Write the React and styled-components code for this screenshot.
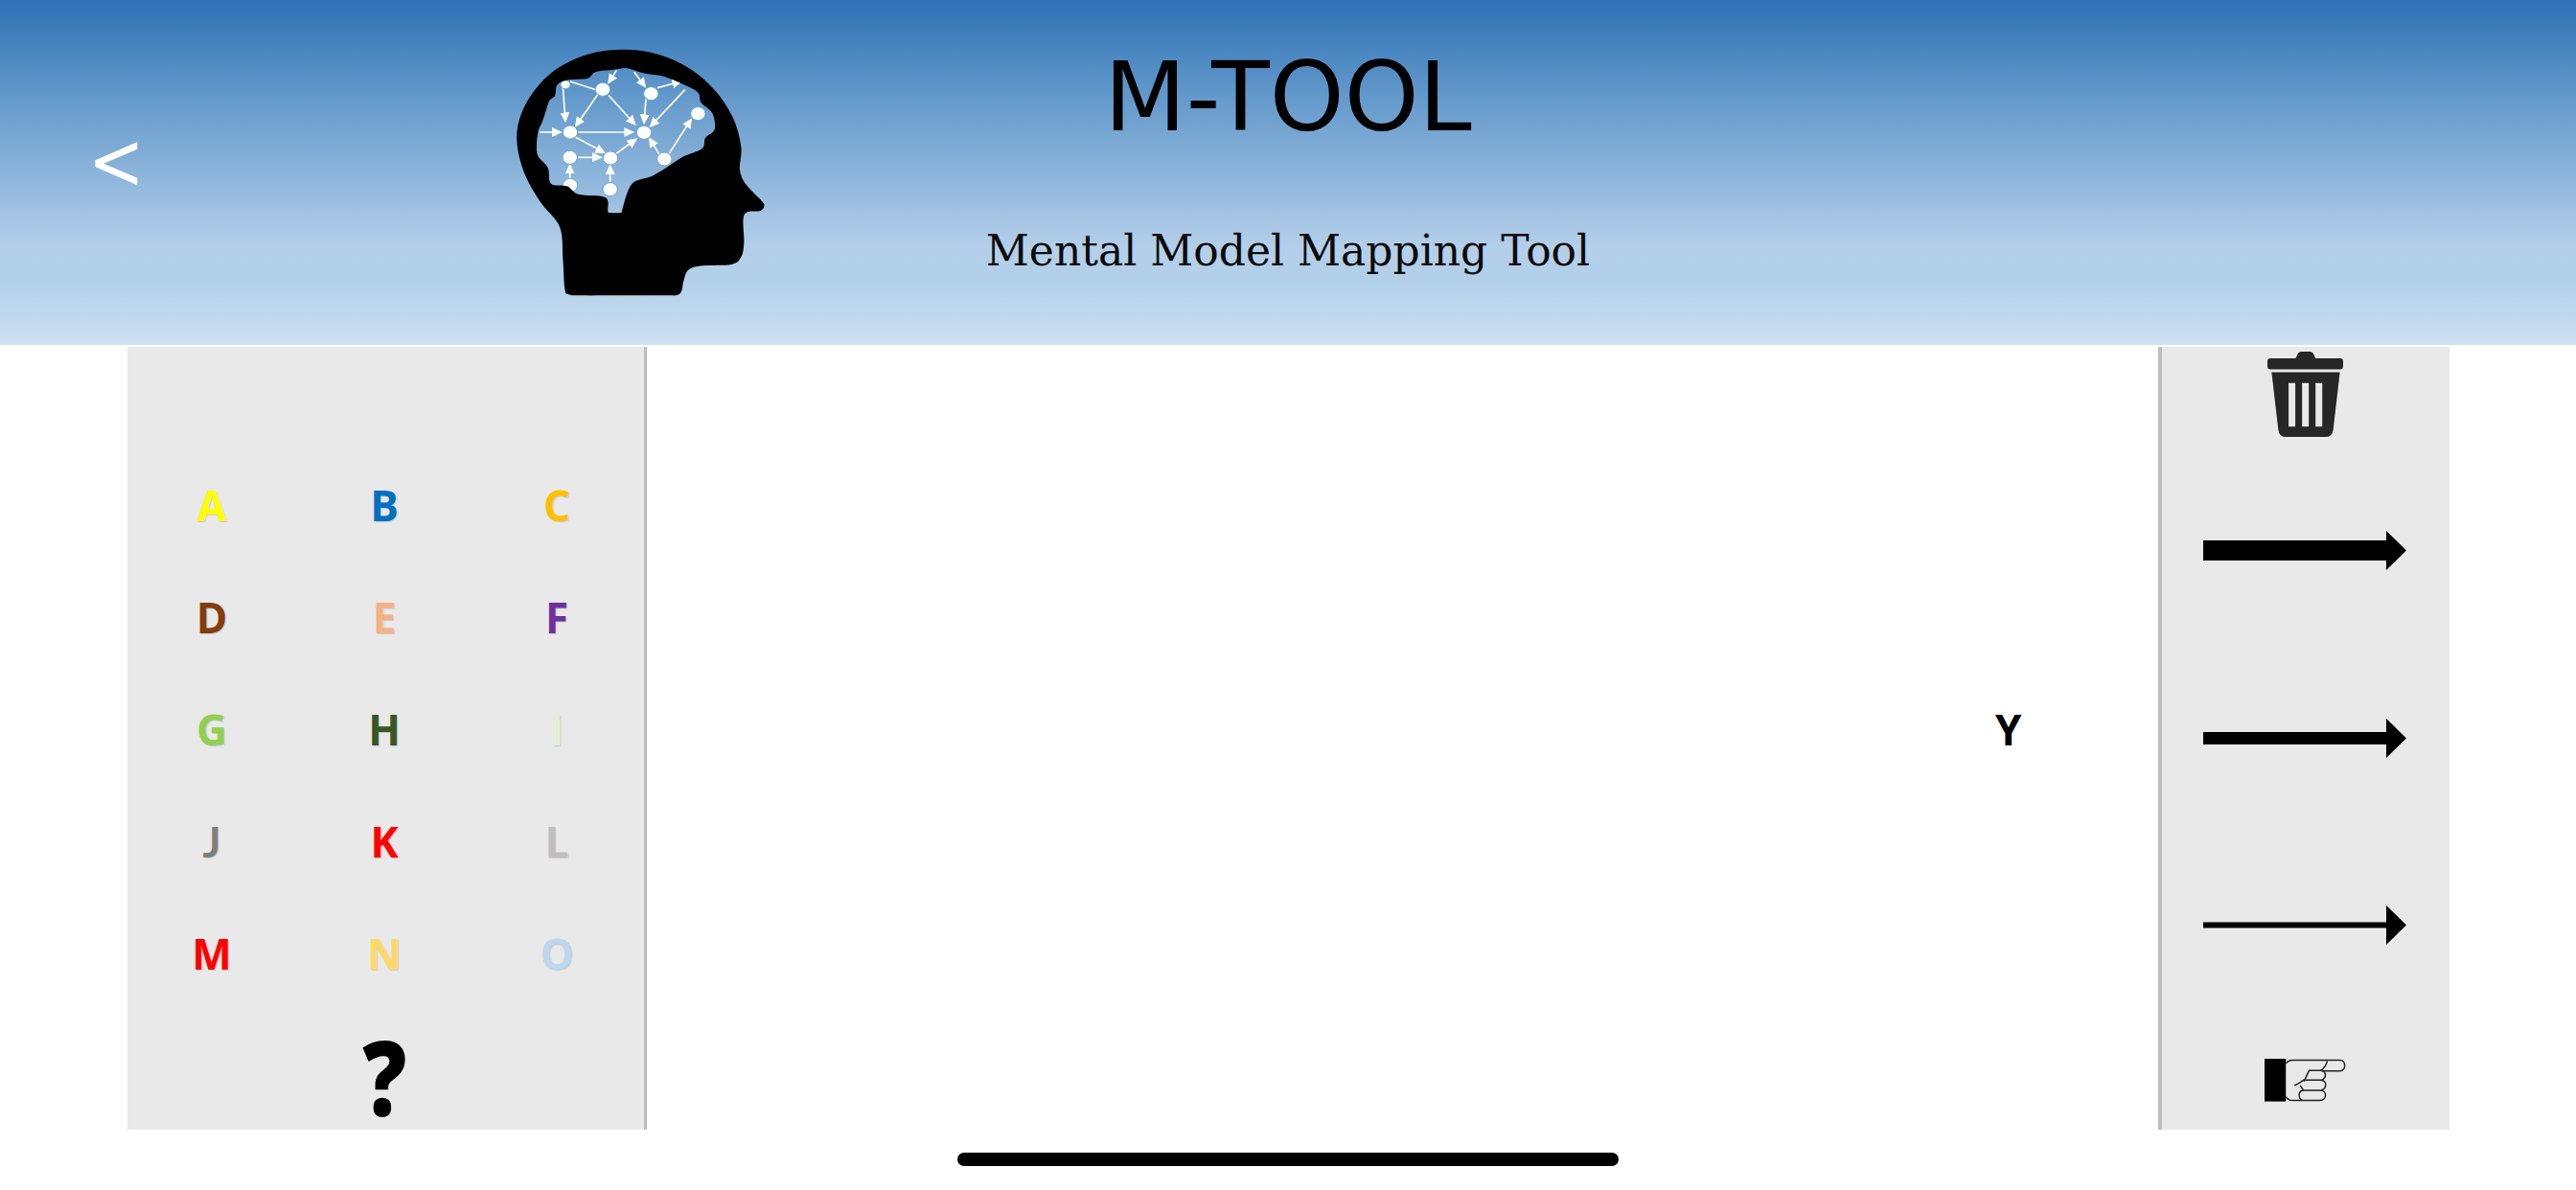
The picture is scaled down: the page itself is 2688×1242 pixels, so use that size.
import React from "react";
import styled, { createGlobalStyle } from "styled-components";

const Global = createGlobalStyle`
  html, body { margin: 0; padding: 0; background: #fff; }
  body { width: 2688px; height: 1242px; overflow: hidden; font-family: "DejaVu Sans", sans-serif; }
`;

const Page = styled.div`
  display: flex;
  flex-direction: column;
  width: 2688px;
  height: 1242px;
`;

const Header = styled.header`
  flex: none;
  height: 360px;
  display: grid;
  grid-template-columns: 1fr auto 1fr;
  background: linear-gradient(180deg, #2e71b4 0%, #6399cb 28%, #b4cfea 72%, #b2d0e9 82%, #cde0f3 100%);
`;

const HeaderLeft = styled.div`
  display: flex;
  align-items: flex-start;
`;

const BackButton = styled.div`
  margin: 118px 0 0 92px;
  width: 60px;
  font: 400 70px/100px "DejaVu Sans", sans-serif;
  color: #fff;
  transform: scaleY(1.2);
`;

const LogoSvg = styled.svg`
  display: block;
  margin: 20px 0 0 328px;
  width: 360px;
  height: 310px;
  flex: none;
`;

const TitleBlock = styled.div`
  display: flex;
  flex-direction: column;
  align-items: center;
`;

const Title = styled.h1`
  margin: 52px 0 0;
  font: 400 99px/100px "DejaVu Sans", sans-serif;
  color: #000;
`;

const Subtitle = styled.p`
  margin: 85px 0 0;
  font: 400 44px/50px "DejaVu Serif", serif;
  color: #0b0b0b;
`;

const Workspace = styled.main`
  flex: none;
  display: flex;
  height: 817px;
  margin: 2px 132px 0 133px;
`;

const LetterPanel = styled.aside`
  flex: none;
  box-sizing: border-box;
  width: 542px;
  padding: 107px 0 0;
  background: #e9e9e9;
  border-right: 3px solid #bdbdbd;
  display: grid;
  grid-template-columns: repeat(3, 180px);
  grid-auto-rows: 117px;
`;

const Letter = styled.div`
  display: flex;
  align-items: center;
  justify-content: center;
  padding-right: 4px;
  font: 700 44px/117px ${(p) => (p.$narrow ? '"Lato"' : '"Open Sans"')}, sans-serif;
  color: ${(p) => p.$color};
  text-shadow: 1px 1px 1px rgba(0, 0, 0, 0.14);
`;

const Help = styled.div`
  grid-column: 2;
  padding-right: 4px;
  text-align: center;
  font: 800 108px/100px "Open Sans", sans-serif;
  color: #000;
  margin-top: 20px;
  transform: scaleX(0.84);
`;

const Canvas = styled.section`
  flex: 1;
  position: relative;
  background: #fff;
`;

const CanvasNode = styled.div`
  position: absolute;
  left: ${(p) => p.$x}px;
  top: ${(p) => p.$y}px;
  font: 700 44px/56px "Open Sans", sans-serif;
  color: #000;
`;

const ToolPanel = styled.aside`
  flex: none;
  box-sizing: border-box;
  width: 304px;
  padding: 5px 2px 0 0;
  background: #e9e9e9;
  border-left: 4px solid #bdbdbd;
  display: flex;
  flex-direction: column;
  align-items: center;
`;

const TrashSvg = styled.svg`
  display: block;
  width: 79px;
  height: 89px;
`;

const ArrowSvg = styled.svg`
  display: block;
  width: 212px;
  height: 41px;
  margin-top: ${(p) => p.$top}px;
`;

const HandSvg = styled.svg`
  display: block;
  width: 85px;
  height: 46px;
  margin-top: 118px;
`;

const HomeBar = styled.div`
  flex: none;
  width: 690px;
  height: 14px;
  margin: 24px auto 0;
  border-radius: 7px;
  background: #000;
`;

const smooth = (pts) => {
  const n = pts.length;
  const at = (i) => pts[(i + n) % n];
  let d = `M${pts[0][0]} ${pts[0][1]}`;
  for (let i = 0; i < n; i++) {
    const [p0, p1, p2, p3] = [at(i - 1), at(i), at(i + 1), at(i + 2)];
    const c1 = [p1[0] + (p2[0] - p0[0]) / 6, p1[1] + (p2[1] - p0[1]) / 6];
    const c2 = [p2[0] - (p3[0] - p1[0]) / 6, p2[1] - (p3[1] - p1[1]) / 6];
    d += `C${c1[0]} ${c1[1]} ${c2[0]} ${c2[1]} ${p2[0]} ${p2[1]}`;
  }
  return d + "Z";
};

const HEAD = [[312,650],[250,570],[197,470],[178,360],[210,258],[290,165],[400,110],[515,95],[620,110],[720,155],[800,225],[855,310],[880,400],[876,470],[895,517],[945,570],[952,585],[940,600],[890,612],[889,700],[880,745],[850,768],[760,772],[715,785],[700,820],[694,850],[680,864],[640,865],[500,865],[370,865],[340,862],[328,845],[322,750]];
const BRAIN = [[240,395],[245,350],[258,320],[268,290],[280,255],[297,240],[305,205],[340,190],[400,185],[425,165],[480,158],[520,153],[560,165],[590,172],[640,180],[700,205],[745,230],[755,262],[790,295],[797,345],[768,372],[758,405],[700,430],[650,462],[600,492],[548,508],[525,540],[507,600],[503,606],[468,606],[463,600],[455,558],[370,548],[335,523],[285,515],[275,465],[245,430]];

const NODES = [[447,220,23,21],[598,233,23,21],[745,296,23,21],[345,354,23,21],[576,355,23,21],[344,433,23,21],[471,435,23,21],[640,438,23,21],[470,533,23,21],[345,520,23,21],[330,205,15,13]];
const LINKS = [
  [345,195,428,222,false],[322,210,330,320],[432,235,362,335],[465,238,548,330],[490,160,465,200],
  [545,165,580,212],[618,215,692,195],[582,250,576,326],[705,220,596,336],[655,420,724,313],
  [625,425,593,373],[370,354,542,354],[250,354,316,354],[362,370,452,418],[370,433,442,433],
  [490,420,552,375],[344,500,344,456],[470,512,470,458],
];

const Logo = () => (
  <LogoSvg viewBox="0 0 1080 930">
    <defs>
      <marker id="tip" viewBox="0 0 30 30" refX="26" refY="15" markerWidth="32" markerHeight="32" markerUnits="userSpaceOnUse" orient="auto">
        <path d="M0 1L30 15L0 29Z" fill="#fff" />
      </marker>
    </defs>
    <g stroke="#fff" strokeWidth="5">
      {LINKS.map(([a, b, c, d, tip], i) => (
        <line key={i} x1={a} y1={b} x2={c} y2={d} markerEnd={tip === false ? undefined : "url(#tip)"} />
      ))}
    </g>
    {NODES.map(([x, y, rx, ry], i) => (
      <ellipse key={i} cx={x} cy={y} rx={rx} ry={ry} fill="#fff" stroke="#6fa6dc" strokeWidth="3" />
    ))}
    <path d={smooth(HEAD) + smooth(BRAIN)} fillRule="evenodd" fill="#000" />
  </LogoSvg>
);

const Trash = () => (
  <TrashSvg viewBox="437 82 236 266">
    <path d="M525 103L532 88Q535 82 542 82H570Q577 82 580 88L587 103H664Q673 103 673 112V128Q673 137 664 137H446Q437 137 437 128V112Q437 103 446 103Z" fill="#262626" />
    <path fillRule="evenodd" fill="#262626" d="M450 146H663L642 326Q639 348 618 348H495Q474 348 471 326ZM503 180V316H524V180ZM545 180V316H566V180ZM587 180V316H608V180Z" />
  </TrashSvg>
);

const Arrow = ({ weight, top }) => (
  <ArrowSvg $top={top} viewBox="0 0 212 41">
    <rect x="0" y={20.5 - weight / 2} width="192" height={weight} fill="#000" />
    <path d="M191 0L212 20.5L191 41Z" fill="#000" />
  </ArrowSvg>
);

const Hand = () => (
  <HandSvg viewBox="428 608 256 138">
    <rect x="428" y="611" width="67" height="134" fill="#000" />
    <g fill="none" stroke="#222" strokeWidth="4.5">
      <path d="M495 625Q503 615 515 615H665C685 615 685 649 665 649H610" />
      <path d="M495 730Q503 742 515 742H600C625 742 625 712 605 710H550C530 712 535 742 550 742" />
      <path d="M605 710C625 705 625 680 605 678H550C540 685 532 692 522 694" />
      <path d="M607 678C625 670 622 650 605 648H568L552 682" />
      <path d="M625 618Q622 635 605 648" />
      <path d="M540 695Q546 703 550 710" />
    </g>
  </HandSvg>
);

const LETTERS = [
  ["A", "#ffff00"], ["B", "#0070c0"], ["C", "#ffc000"],
  ["D", "#843c0c"], ["E", "#f4b183"], ["F", "#7030a0"],
  ["G", "#92d050"], ["H", "#385723"], ["I", "#e2f0d9"],
  ["J", "#7f7f7f", true], ["K", "#ff0000"], ["L", "#bfbfbf"],
  ["M", "#ff0000"], ["N", "#ffd966"], ["O", "#bdd7ee"],
];

export default function App() {
  return (
    <Page>
      <Global />
      <Header>
        <HeaderLeft>
          <BackButton>&lt;</BackButton>
          <Logo />
        </HeaderLeft>
        <TitleBlock>
          <Title>M-TOOL</Title>
          <Subtitle>Mental Model Mapping Tool</Subtitle>
        </TitleBlock>
        <div />
      </Header>
      <Workspace>
        <LetterPanel>
          {LETTERS.map(([l, c, narrow]) => (
            <Letter key={l} $color={c} $narrow={narrow}>{l}</Letter>
          ))}
          <Help>?</Help>
        </LetterPanel>
        <Canvas>
          <CanvasNode $x={1407} $y={371}>Y</CanvasNode>
        </Canvas>
        <ToolPanel>
          <Trash />
          <Arrow weight={21} top={98} />
          <Arrow weight={13} top={155} />
          <Arrow weight={6} top={154} />
          <Hand />
        </ToolPanel>
      </Workspace>
      <HomeBar />
    </Page>
  );
}
